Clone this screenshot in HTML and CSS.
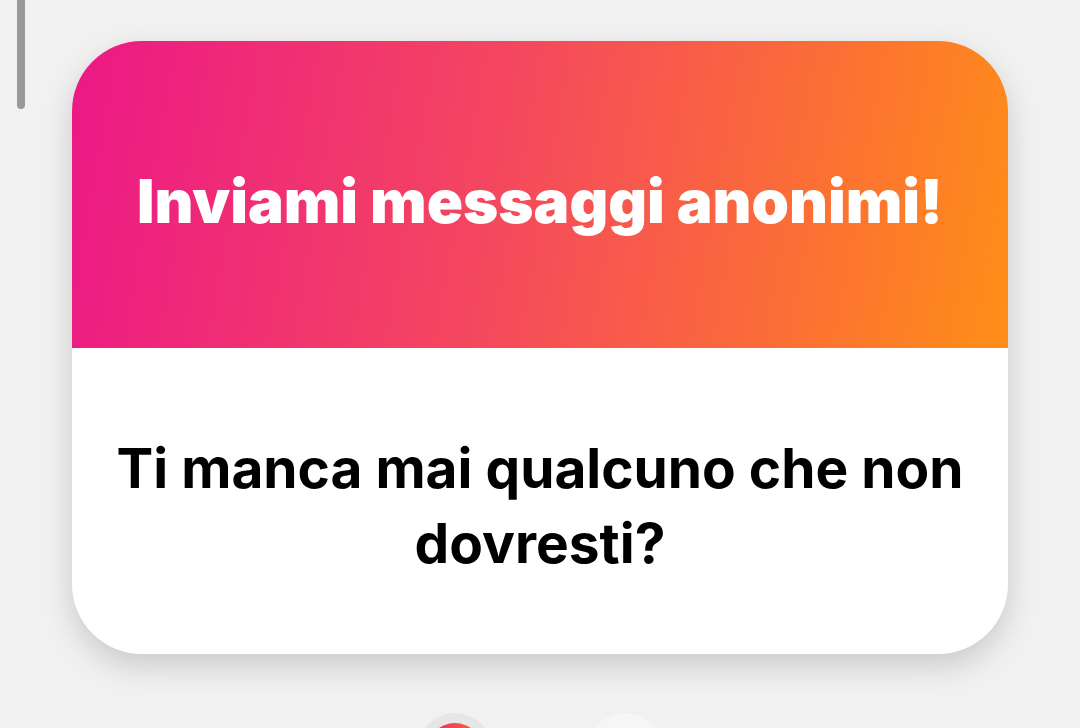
FILE: index.html
```html
<!DOCTYPE html>
<html lang="it">
<head>
  <meta charset="UTF-8">
  <title>Messaggi anonimi</title>
  <link rel="stylesheet" href="styles.css">
</head>
<body>

  <div class="scrollbar"></div>

  <div class="card">
    <div class="card-head">
      <h1>Inviami messaggi anonimi!</h1>
    </div>
    <div class="card-body">
      <p>Ti manca mai qualcuno che non dovresti?</p>
    </div>
  </div>

  <div class="dots">
    <div class="dot dot-active"><span></span></div>
    <div class="dot"></div>
  </div>

</body>
</html>
```

FILE: styles.css
```css
html, body {
  height: 100%;
}

body {
  margin: 0;
  background-color: #f1f1f1;
  font-family: 'Inter', 'Roboto', sans-serif;
  overflow: hidden;
  position: relative;
}

.scrollbar {
  position: absolute;
  left: 17px;
  top: 0;
  width: 8px;
  height: 109px;
  background-color: #999999;
  border-radius: 0 0 4px 4px;
}

.card {
  margin: 41px 72px 0 72px;
  width: 936px;
  border-radius: 70px;
  overflow: hidden;
  background-color: #ffffff;
  box-shadow: 0 12px 30px rgba(0,0,0,0.16);
}

.card-head {
  height: 307px;
  display: flex;
  align-items: center;
  justify-content: center;
  background: linear-gradient(100deg, #ec1887 0%, #f4475f 45%, #fb6c38 75%, #ff8e17 100%);
}

.card-head h1 {
  margin: 12px 0 0 0;
  color: #ffffff;
  font-size: 60px;
  font-weight: 900;
  letter-spacing: 0;
}

.card-body {
  height: 306px;
  display: flex;
  align-items: center;
  justify-content: center;
}

.card-body p {
  margin: 10px 20px 0 20px;
  text-align: center;
  color: #000000;
  font-size: 55px;
  font-weight: 700;
  line-height: 75px;
}

.dots {
  display: flex;
  justify-content: center;
  gap: 94px;
  margin-top: 59px;
}

.dot {
  width: 76px;
  height: 76px;
  border-radius: 50%;
  background-color: #f6f6f6;
  display: flex;
  justify-content: center;
  padding-top: 10px;
  box-sizing: border-box;
}

.dot-active {
  background-color: #e6e6e6;
}

.dot-active span {
  width: 56px;
  height: 56px;
  border-radius: 50%;
  background: linear-gradient(90deg, #e8246a, #f5703a);
}
```
